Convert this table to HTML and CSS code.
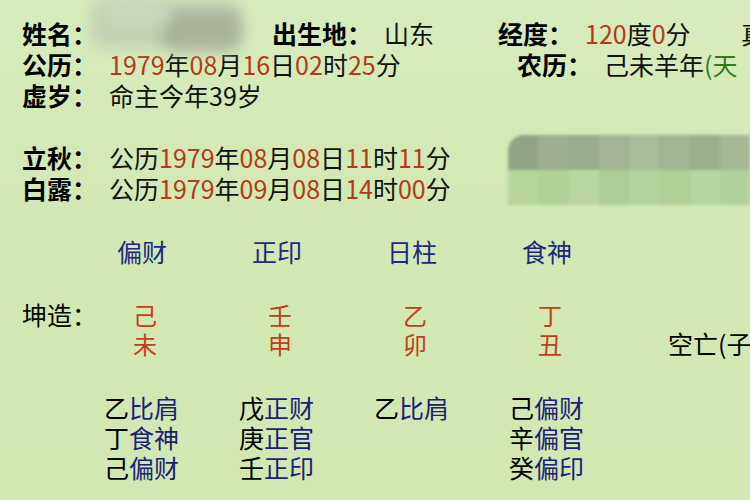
FILE: index.html
```html
<!DOCTYPE html>
<html lang="zh">
<head>
<meta charset="utf-8">
<title>八字排盘</title>
<link rel="stylesheet" href="styles.css">
</head>
<body>
<div class="page">
  <section class="info">
    <div class="row">
      <div class="cell w250"><span class="lbl">姓名：</span><span class="name"><i class="blob b1"></i><i class="blob b2"></i><i class="blob b3"></i></span></div>
      <div class="cell w226"><span class="lbl">出生地：</span><span class="sp">山东</span></div>
      <div class="cell w243"><span class="lbl">经度：</span><span class="sp"><span class="num">120</span>度<span class="num">0</span>分</span></div>
      <div class="cell">真</div>
    </div>
    <div class="row">
      <div class="cell w495"><span class="lbl">公历：</span><span class="sp"><span class="num">1979</span>年<span class="num">08</span>月<span class="num">16</span>日<span class="num">02</span>时<span class="num">25</span>分</span></div>
      <div class="cell"><span class="lbl">农历：</span><span class="sp">己未羊年<span class="grn">(天</span></span></div>
    </div>
    <div class="row">
      <div class="cell"><span class="lbl">虚岁：</span><span class="sp">命主今年39岁</span></div>
    </div>
  </section>

  <section class="terms">
    <div class="terms-text">
      <div class="row"><span class="lbl">立秋：</span><span class="sp">公历<span class="num">1979</span>年<span class="num">08</span>月<span class="num">08</span>日<span class="num">11</span>时<span class="num">11</span>分</span></div>
      <div class="row"><span class="lbl">白露：</span><span class="sp">公历<span class="num">1979</span>年<span class="num">09</span>月<span class="num">08</span>日<span class="num">14</span>时<span class="num">00</span>分</span></div>
    </div>
    <div class="mosaic">
      <div class="mos-top"><i></i><i></i><i></i><i></i><i></i><i></i><i></i><i></i></div>
      <div class="mos-bot"><i></i><i></i><i></i><i></i><i></i><i></i><i></i><i></i></div>
    </div>
  </section>

  <section class="pillars">
    <div class="grid heads">
      <div></div>
      <div class="head">偏财</div>
      <div class="head">正印</div>
      <div class="head">日柱</div>
      <div class="head">食神</div>
    </div>
    <div class="grid stems">
      <div class="plain">坤造：</div>
      <div class="gz"><div>己</div><div>未</div></div>
      <div class="gz"><div>壬</div><div>申</div></div>
      <div class="gz"><div>乙</div><div>卯</div></div>
      <div class="gz"><div>丁</div><div>丑</div></div>
      <div class="kong">空亡(子</div>
    </div>
    <div class="grid hidden">
      <div></div>
      <div class="hs"><div>乙<b>比肩</b></div><div>丁<b>食神</b></div><div>己<b>偏财</b></div></div>
      <div class="hs"><div>戊<b>正财</b></div><div>庚<b>正官</b></div><div>壬<b>正印</b></div></div>
      <div class="hs"><div>乙<b>比肩</b></div></div>
      <div class="hs"><div>己<b>偏财</b></div><div>辛<b>偏官</b></div><div>癸<b>偏印</b></div></div>
    </div>
  </section>
</div>
</body>
</html>
```

FILE: styles.css
```css
html, body {
  margin: 0;
  padding: 0;
  background: #d4e9b6;
  overflow: hidden;
}
body {
  width: 750px;
  height: 500px;
  font-family: "Noto Sans CJK SC", "Noto Sans", sans-serif;
  font-size: 25px;
  color: #111;
}
.page {
  padding: 18px 0 0 22px;
  width: 728px;
  height: 482px;
  overflow: hidden;
  background: linear-gradient(180deg, #d8ebbd 0%, #d3e8b4 40%, #d2e7b2 100%);
}
.row {
  display: flex;
  height: 31px;
  line-height: 31px;
  white-space: nowrap;
}
.cell { flex: none; white-space: nowrap; }
.w250 { width: 250px; }
.w226 { width: 226px; }
.w243 { width: 243px; }
.w495 { width: 495px; }
.lbl { font-weight: 700; color: #000; }
.sp { margin-left: 12px; }
.num { color: #b23a18; }
.grn { color: #2f7a1e; }

.name {
  position: relative;
  display: inline-block;
  width: 150px;
  height: 31px;
  vertical-align: top;
  margin-left: -6px;
}
.blob {
  position: absolute;
  display: block;
  filter: blur(7px);
  border-radius: 14px;
}
.b1 { left: 0; top: -18px; width: 150px; height: 48px; background: #c3d1b2; }
.b2 { left: 70px; top: -8px; width: 80px; height: 40px; background: #aab49c; }
.b3 { left: 10px; top: -18px; width: 70px; height: 26px; background: #c9d6bb; }

.terms {
  display: flex;
  margin-top: 31px;
}
.terms-text { width: 486px; flex: none; }
.mosaic {
  margin-top: -7px;
  width: 250px;
  height: 70px;
  border-radius: 16px 0 0 0;
  overflow: hidden;
  filter: blur(1.5px);
}
.mos-top, .mos-bot { display: flex; height: 35px; }
.mos-top i, .mos-bot i { flex: 1; display: block; }
.mos-top i:nth-child(1) { background: #92a383; }
.mos-top i:nth-child(2) { background: #9fae8e; }
.mos-top i:nth-child(3) { background: #9aac8b; }
.mos-top i:nth-child(4) { background: #a3b393; }
.mos-top i:nth-child(5) { background: #abbc9a; }
.mos-top i:nth-child(6) { background: #a2b492; }
.mos-top i:nth-child(7) { background: #9cae8c; }
.mos-top i:nth-child(8) { background: #a6b896; }
.mos-bot i:nth-child(1) { background: #b6d49c; }
.mos-bot i:nth-child(2) { background: #b1d097; }
.mos-bot i:nth-child(3) { background: #b9d6a0; }
.mos-bot i:nth-child(4) { background: #aecc95; }
.mos-bot i:nth-child(5) { background: #b4d29b; }
.mos-bot i:nth-child(6) { background: #b0cf97; }
.mos-bot i:nth-child(7) { background: #b7d59e; }
.mos-bot i:nth-child(8) { background: #b2d099; }

.grid {
  display: grid;
  grid-template-columns: 82px repeat(4, 135px) auto;
  white-space: nowrap;
}
.heads { margin-top: 31px; line-height: 30px; }
.head { padding-left: 13px; color: #1b2a7e; }
.stems { margin-top: 34px; line-height: 29px; }
.plain { color: #000; }
.gz { padding-left: 29px; color: #c0401a; font-size: 24px; }
.kong { align-self: end; padding-left: 24px; color: #000; }
.hidden { margin-top: 34px; line-height: 30px; }
.hs { color: #000; }
.hs b { font-weight: 400; color: #1a2276; }
```
